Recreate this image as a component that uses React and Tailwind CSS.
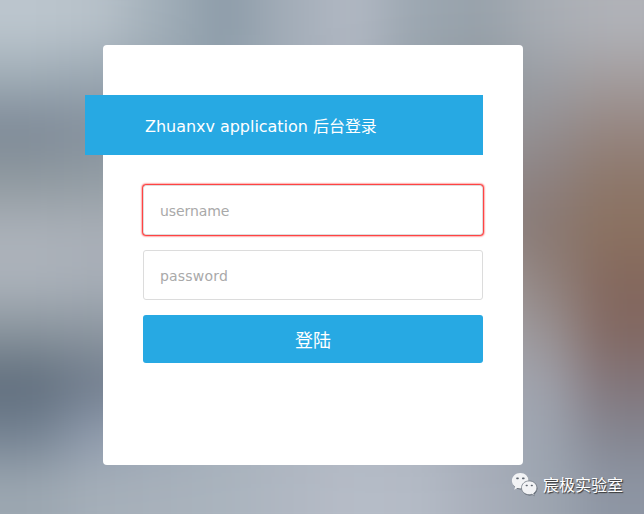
import React from "react";

// Average tones of the out-of-focus photo, ten per row.
const tones = [
  "#bcc6ce", "#b8c2ca", "#a2afb9", "#8d9ca9", "#a3adb8", "#b1b8c3", "#9ca7b1", "#98a2ab", "#a8adb4", "#b0b2b8",
  "#a0adb6", "#9aa7b2", "#97a4af", "#90a0ac", "#a3adb8", "#adb4bf", "#959fa8", "#8f989f", "#9c9fa5", "#a39d9e",
  "#7d8997", "#84909d", "#909ca8", "#909ca8", "#a3adb8", "#a0a0a0", "#a0a0a0", "#989a9e", "#938f92", "#968681",
  "#8f999f", "#929ca3", "#98a2a8", "#98a2a8", "#a0a0a0", "#a0a0a0", "#a0a0a0", "#8c898c", "#8d8180", "#8d776a",
  "#abb1b9", "#a9afb7", "#a9afb7", "#a9afb7", "#a0a0a0", "#a0a0a0", "#a0a0a0", "#8e8585", "#897973", "#8b7160",
  "#acb3bb", "#a8afb8", "#a4abb4", "#a4abb4", "#a0a0a0", "#a0a0a0", "#a0a0a0", "#a09c9f", "#91837f", "#84685d",
  "#89949d", "#8c96a0", "#8a949e", "#8a949e", "#a0a0a0", "#a0a0a0", "#a0a0a0", "#a4a6ad", "#9a9496", "#826862",
  "#5f6d7c", "#707c8c", "#7d899a", "#8a949e", "#a0a8b0", "#a0a8b0", "#a0a8b0", "#a2a8b2", "#a0a2ac", "#82757a",
  "#748292", "#8f9bad", "#9ba7b6", "#a5afba", "#acb5c0", "#b0b7c2", "#aeb5c0", "#a4abb7", "#9da5b1", "#848590",
  "#9ca7b1", "#a5afb9", "#a8b1bb", "#aab4be", "#b0b7c2", "#b6bcc7", "#b4bbc6", "#a9afbb", "#9ea6b1", "#8d95a3",
];

function Backdrop() {
  return (
    <div className="absolute -inset-[60px] grid grid-cols-[124px_repeat(8,64px)_124px] grid-rows-[112px_repeat(8,51px)_112px] blur-[25px]">
      {tones.map((tone, i) => (
        <div key={i} style={{ backgroundColor: tone }} />
      ))}
    </div>
  );
}

function WeChatMark() {
  return (
    <svg width="28" height="26" viewBox="0 0 28 26" className="shrink-0">
      <g fill="#5f6670" transform="translate(.5 .9)">
        <ellipse cx="9.3" cy="9.8" rx="8.3" ry="7.8" />
        <ellipse cx="18.2" cy="16.8" rx="7.7" ry="6.9" />
      </g>
      <path
        fill="#f2f3f5"
        d="M9.3 2C4.6 2 .9 5.400.9 9.800c0 2.500 1.300 4.600 3.200 6l-.9 3 3.200-1.800c.9.3 1.900.5 2.900.5 4.700 0 8.400-3.400 8.400-7.700C17.700 5.400 14 2 9.300 2Z"
      />
      <path
        fill="#f2f3f5"
        stroke="#737b85"
        strokeWidth=".8"
        d="M18.200 9.900c-4.300 0-7.700 3-7.700 6.900s3.400 6.900 7.700 6.900c.9 0 1.800-.2 2.600-.4l2.600 1.500-.7-2.400c1.900-1.300 3.200-3.300 3.200-5.600 0-3.900-3.400-6.900-7.700-6.900Z"
      />
      <g fill="#5f6670">
        <rect x="5.200" y="6.600" width="2.600" height="1.600" rx=".7" />
        <rect x="11" y="6.600" width="2.600" height="1.600" rx=".7" />
        <rect x="14.600" y="13.700" width="2.200" height="1.500" rx=".7" />
        <rect x="19.700" y="13.700" width="2.200" height="1.500" rx=".7" />
      </g>
    </svg>
  );
}

const field =
  "block h-[50px] w-full rounded-[3px] border border-[#dcdcdc] bg-white px-4 pt-[2px] text-[14px] text-[#666] outline-none placeholder:text-[#a9a9a9]";

export default function App() {
  return (
    <div className="relative h-[514px] w-[644px] overflow-hidden bg-[#a0a8b0] pt-[45px] font-['DejaVu_Sans','Noto_Sans_CJK_SC',sans-serif]">
      <Backdrop />
      <main className="relative ml-[103px] h-[420px] w-[420px] rounded bg-white px-10 pt-[50px]">
        <h1 className="-ml-[58px] flex h-[60px] items-center bg-[#27a9e3] pl-[60px] pt-[4px] text-[16px] tracking-[-0.03px] text-white whitespace-nowrap">
          Zhuanxv application 后台登录
        </h1>
        <form className="mt-[30px] flex flex-col gap-[15px]">
          <input
            type="text"
            placeholder="username"
            className={field + " tracking-[-0.1px] shadow-[0_0_2px_1px_#ff0000]"}
          />
          <input
            type="password"
            placeholder="password"
            className={field + " tracking-[0.2px]"}
          />
          <button
            type="button"
            className="h-12 w-full rounded-[3px] bg-[#27a9e3] pt-[3px] text-[18px] text-white"
          >
            登陆
          </button>
        </form>
      </main>
      <div className="absolute left-[511px] top-[471px] flex items-center gap-1 font-['Noto_Sans_CJK_SC',sans-serif] text-[16px] leading-[26px] text-white">
        <WeChatMark />
        <span className="[text-shadow:1px_1px_1px_#333]">宸极实验室</span>
      </div>
    </div>
  );
}
